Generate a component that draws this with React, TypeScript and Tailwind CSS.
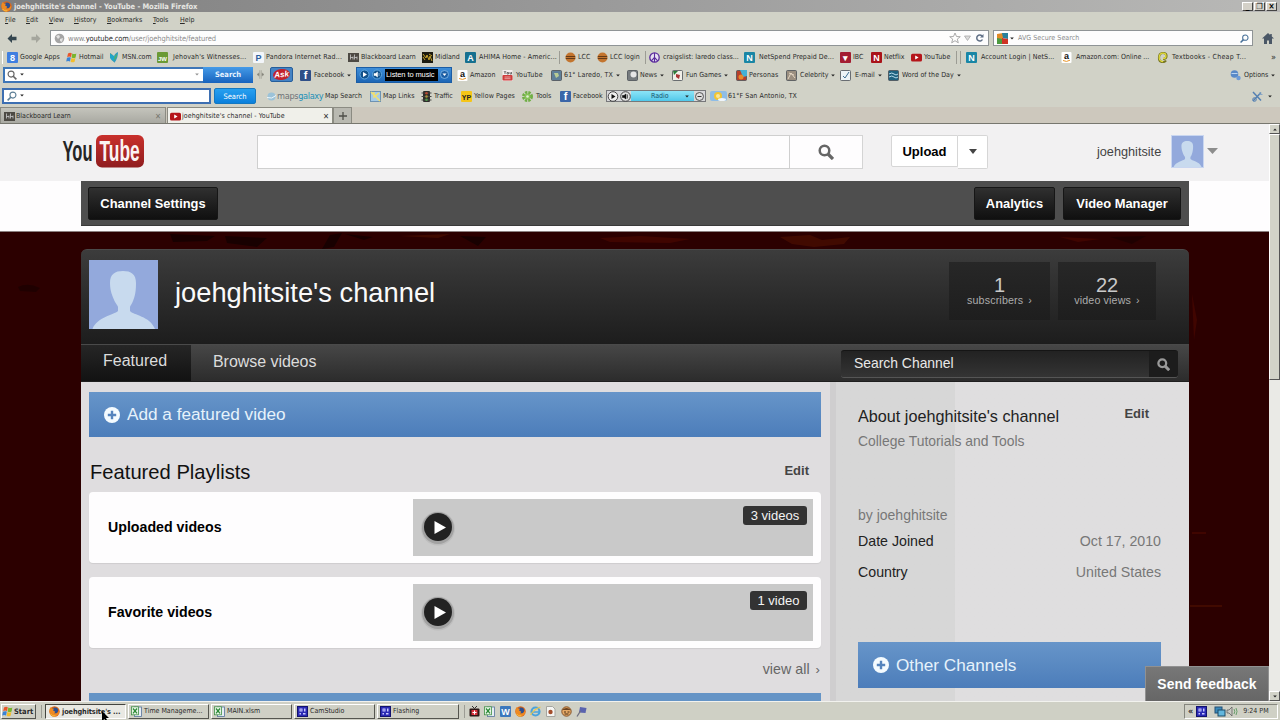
import type { ReactNode } from "react";

const UI = "font-['DejaVu_Sans_Condensed','DejaVu_Sans',sans-serif] text-[7px] leading-[9px]";

/* ---------- icons ---------- */

function Letter({ bg, fg = "#fff", ch, size = 9 }: { bg: string; fg?: string; ch: string; size?: number }) {
  return (
    <svg width="11" height="11" viewBox="0 0 11 11" className="shrink-0">
      <rect width="11" height="11" rx="1" fill={bg} />
      <text x="5.5" y="8.7" textAnchor="middle" fontSize={size} fontWeight="700" fontFamily="Liberation Sans" fill={fg}>
        {ch}
      </text>
    </svg>
  );
}

function Svg({ children, w = 11, h = 11 }: { children: ReactNode; w?: number; h?: number }) {
  return (
    <svg width={w} height={h} viewBox={`0 0 ${w} ${h}`} className="shrink-0">
      {children}
    </svg>
  );
}

const Firefox = () => (
  <Svg>
    <circle cx="5.5" cy="5.5" r="5.2" fill="#d9661a" />
    <circle cx="6" cy="4.6" r="3.1" fill="#2c4f8f" />
    <path d="M.6 3.2C1 1.8 2 1 2 1l.8 1.4 2.4.3-1.3 1.6 2.3 1.5-1 1.7 2.8-.3 2.3-2.6c.2 3-1.7 5.8-4.9 5.9C2 10.500.1 7.500.6 3.200z" fill="#ee8a22" />
    <path d="M1.500 8c1 1.500 3 2.200 4.800 1.800" stroke="#f8cf4a" strokeWidth=".8" fill="none" />
  </Svg>
);

const WinFlag = () => (
  <Svg>
    <path d="M2 1.500q2-1.300 3.800-.2L5 5Q3 4 1.200 5.200z" fill="#e8562a" />
    <path d="M6.300 1.600q2 1 4 0L9.600 5.400q-2 1-4 0z" fill="#79b52d" />
    <path d="M1 5.800q2-1.200 3.800-.2l-.8 3.800Q2 8.400.200 9.600z" fill="#3a83d6" />
    <path d="M5.400 6q2 1 4 0l-.8 3.800q-2 1-4 0z" fill="#f3bd2a" />
  </Svg>
);

const Msn = () => (
  <Svg>
    <path d="M1 1q4 1 4 9Q2 8 1 1z" fill="#e8842a" />
    <path d="M1 1l4 3v6Q2 8 1 6z" fill="#20a6c9" />
    <path d="M9 0Q5 2 5 5v6q4-4 4-11z" fill="#2f9cc0" />
    <path d="M8 2Q5 4 5 8q3-2 3-6z" fill="#4fb36a" />
  </Svg>
);

const Blackboard = () => (
  <Svg>
    <rect y="1" width="11" height="9" fill="#4d4a44" />
    <path d="M2.500 2.500v5M5 4.500v3M6.500 2.500v5M9 4.500v3M2.500 5.500H5M6.500 5.500H9" stroke="#ccc" strokeWidth=".8" />
  </Svg>
);

const Midland = () => (
  <Svg>
    <rect width="11" height="11" fill="#1b1a10" />
    <path d="M1 2l3 4 1-3 2 5 1-4 2 5M1 5l2 3M7 2l3 2" stroke="#c9a52c" strokeWidth="1" fill="none" />
  </Svg>
);

const Ball = () => (
  <Svg>
    <circle cx="5.500" cy="5.500" r="5" fill="#c3752f" />
    <path d="M.8 4.500h9.400M.8 6.500h9.400" stroke="#5a3415" strokeWidth=".9" />
  </Svg>
);

const Peace = () => (
  <Svg>
    <circle cx="5.500" cy="5.500" r="4.700" fill="#e6dff2" stroke="#5a2a9c" strokeWidth="1.300" />
    <path d="M5.500 1v9M5.500 5.500L2.300 8.800M5.500 5.500l3.200 3.300" stroke="#5a2a9c" strokeWidth="1.100" />
  </Svg>
);

const Tube = () => (
  <Svg>
    <rect y="1.800" width="11" height="7.600" rx="1.500" fill="#b5151a" />
    <path d="M4.200 3.600l3.400 2-3.400 2z" fill="#fff" />
  </Svg>
);

const OldTube = () => (
  <Svg>
    <rect x=".5" width="10" height="11" fill="#f4efef" />
    <path d="M2 1l1 1.500V4M4 1L3 2.500M5 2.500h1.500V4H5zM8 2v2h1.500V2" stroke="#444" strokeWidth=".7" fill="none" />
    <rect x=".5" y="5" width="10" height="5.500" rx="1" fill="#cf3b3b" />
    <path d="M2.500 7h6M2.500 8.700h6" stroke="#f3cccc" strokeWidth=".7" />
  </Svg>
);

const Amazon = () => (
  <Svg>
    <rect x=".5" width="10" height="11" rx="1" fill="#fff" />
    <text x="5.500" y="7" fontSize="9" textAnchor="middle" fontWeight="700" fontFamily="Liberation Sans" fill="#111">
      a
    </text>
    <path d="M2 8.500q3.500 2 7-.3" stroke="#e8962a" fill="none" />
  </Svg>
);

const Chegg = () => (
  <Svg>
    <path d="M2 6Q2 1 6 1q3.500 0 3.500 3Q9.500 7 6 7M2 6q0 4 4 4 2 0 3-1.500" stroke="#777521" strokeWidth="2.200" fill="none" />
    <path d="M2.200 6Q2 1.200 6 1.200q3 0 3 2.800Q9 6.600 6 6.600M2.200 6q.3 3.600 4 3.600" stroke="#e2dc3c" strokeWidth="1.200" fill="none" />
  </Svg>
);

// framed thumbnail used by the toolbar's widget buttons
function Tile({ bg, children }: { bg: string; children?: ReactNode }) {
  return (
    <Svg>
      <rect x=".5" y=".5" width="10" height="10" rx="1" fill={bg} stroke="#4a4f55" strokeWidth=".8" />
      {children}
    </Svg>
  );
}

const Excel = () => (
  <Svg>
    <rect x="3.500" y="1" width="7" height="9.500" fill="#e7eef5" stroke="#56739a" strokeWidth=".8" />
    <rect x=".5" y=".8" width="7" height="8" fill="#eaf5e8" stroke="#3f8f45" strokeWidth=".8" />
    <path d="M2 2.500l4 4.800M6 2.500L2 7.300" stroke="#2b8a36" strokeWidth="1.300" />
  </Svg>
);

const Cam = () => (
  <Svg>
    <rect x=".5" y=".5" width="10" height="10" fill="#2a2ab4" stroke="#12126e" />
    <path d="M2.500 2.500h3v3h-3zM7 2.500h1.500v3H7zM2.500 7h1.500v1.500H2.500zM6 7h2.500v1.500H6z" fill="#c8c8ff" />
    <rect x="3.500" y="3.500" width="1" height="1" fill="#2a2ab4" />
  </Svg>
);

function Magnifier({ size, color, width = 2.500 }: { size: number; color: string; width?: number }) {
  return (
    <svg width={size} height={size} viewBox="0 0 16 16" fill="none" stroke={color} strokeWidth={width} className="shrink-0">
      <circle cx="6.500" cy="6.500" r="4.800" />
      <path d="M10 10l5 5" strokeWidth={width + 0.8} />
    </svg>
  );
}

const FlippedMagnifier = ({ size, color }: { size: number; color: string }) => (
  <span className="-scale-x-100">
    <Magnifier size={size} color={color} width={1.8} />
  </span>
);

const Caret = ({ className = "" }: { className?: string }) => (
  <svg width="4" height="3" viewBox="0 0 4 3" className={`shrink-0 ${className}`}>
    <path d="M.2.5h3.600L2 2.500z" fill="#222" />
  </svg>
);

const PlusCircle = () => (
  <svg width="16" height="16" viewBox="0 0 16 16" className="shrink-0">
    <circle cx="8" cy="8" r="8" fill="#f4fbff" />
    <path d="M8 3.800v8.400M3.800 8h8.400" stroke="#5584bd" strokeWidth="2.400" />
  </svg>
);

function Avatar({ className }: { className: string }) {
  return (
    <svg viewBox="0 0 69 69" className={className}>
      <rect width="69" height="69" fill="#93a9dc" />
      <path
        d="M34 11c8 0 13 3 13 12 0 8-1 13-3 18-1 3-3 5-3 6v4c3 4 20 5 25 18H3.500C8 57 25 55 29 51v-4c0-1-2-3-3.500-6-2-5-4.500-10-4.500-18 0-9 5-12 13-12z"
        fill="#c8daee"
      />
    </svg>
  );
}

/* ---------- browser chrome ---------- */

interface BarItem {
  label: string;
  icon: ReactNode;
  w: string;
  iconW?: string;
  track?: string;
  caret?: boolean;
}

function BarLink({ label, icon, w, iconW = "w-[13px]", track = "", caret }: BarItem) {
  return (
    <div className={`flex h-[12px] shrink-0 items-center whitespace-nowrap ${w}`}>
      <span className={`flex shrink-0 ${iconW}`}>{icon}</span>
      <span className={track}>{label}</span>
      {caret && <Caret className="ml-[3px]" />}
    </div>
  );
}

const Divider = ({ className }: { className: string }) => (
  <span className={`h-[13px] shrink-0 border-l border-[#9c9c94] ${className}`} />
);

const BOOKMARKS_A: BarItem[] = [
  { label: "Google Apps", icon: <Letter bg="#3f7fe0" ch="8" />, w: "w-[59px]" },
  { label: "Hotmail", icon: <WinFlag />, w: "w-[43px]" },
  { label: "MSN.com", icon: <Msn />, w: "w-[48px]" },
  {
    label: "Jehovah's Witnesses...",
    icon: <Letter bg="#6b9a35" ch="JW" size={6} />,
    w: "w-[96px]",
    iconW: "w-[16px]",
    track: "tracking-[0.15px]",
  },
  {
    label: "Pandora Internet Rad...",
    icon: <Letter bg="#f3f6fa" fg="#2d5f9e" ch="P" />,
    w: "w-[95px]",
    track: "tracking-[0.15px]",
  },
  { label: "Blackboard Learn", icon: <Blackboard />, w: "w-[74px]" },
  { label: "Midland", icon: <Midland />, w: "w-[43px]" },
  {
    label: "AHIMA Home - Americ...",
    icon: <Letter bg="#16708f" ch="A" />,
    w: "w-[94px]",
    iconW: "w-[14px]",
    track: "tracking-[0.1px]",
  },
];

const BOOKMARKS_B: BarItem[] = [
  { label: "LCC", icon: <Ball />, w: "w-[32px]" },
  { label: "LCC login", icon: <Ball />, w: "w-[48px]" },
];

const BOOKMARKS_C: BarItem[] = [
  { label: "craigslist: laredo class...", icon: <Peace />, w: "w-[95px]", iconW: "w-[14px]" },
  {
    label: "NetSpend Prepaid De...",
    icon: <Letter bg="#1a86a5" ch="N" />,
    w: "w-[96px]",
    iconW: "w-[15px]",
    track: "tracking-[0.08px]",
  },
  { label: "IBC", icon: <Letter bg="#a31d31" ch="▾" />, w: "w-[31px]" },
  { label: "Netflix", icon: <Letter bg="#a91319" ch="N" />, w: "w-[40px]" },
  { label: "YouTube", icon: <Tube />, w: "w-[45px]", track: "tracking-[0.15px]" },
];

const BOOKMARKS_D: BarItem[] = [
  {
    label: "Account Login | NetS...",
    icon: <Letter bg="#1a86a5" ch="N" />,
    w: "w-[95px]",
    iconW: "w-[15px]",
    track: "tracking-[0.08px]",
  },
  { label: "Amazon.com: Online ...", icon: <Amazon />, w: "w-[96px]", iconW: "w-[15px]" },
  {
    label: "Textbooks - Cheap T...",
    icon: <Chegg />,
    w: "w-[114px]",
    iconW: "w-[15px]",
    track: "tracking-[0.25px]",
  },
];

const WIDGETS: BarItem[] = [
  { label: "Amazon", icon: <Amazon />, w: "w-[45px]", iconW: "w-[13px]" },
  { label: "YouTube", icon: <OldTube />, w: "w-[49px]", iconW: "w-[14px]", track: "tracking-[0.2px]" },
  {
    label: "61° Laredo, TX",
    icon: (
      <Tile bg="#5f7f98">
        <path d="M3 3h4l1 3-3 2z" fill="#b9cc94" />
      </Tile>
    ),
    w: "w-[76px]",
    track: "tracking-[0.15px]",
    caret: true,
  },
  {
    label: "News",
    icon: (
      <Tile bg="#767b7e">
        <circle cx="6.500" cy="4.500" r="3" fill="#e6e6e6" />
      </Tile>
    ),
    w: "w-[45px]",
    caret: true,
  },
  {
    label: "Fun Games",
    icon: (
      <Tile bg="#f0efe8">
        <path d="M1 1h5L2 5z" fill="#2b7b38" />
        <path d="M4 4l4 1-1 4-3-2z" fill="#a33" />
      </Tile>
    ),
    w: "w-[64px]",
    iconW: "w-[14px]",
    caret: true,
  },
  {
    label: "Personas",
    icon: (
      <Tile bg="#b7402a">
        <path d="M4 0h7v6L7 7z" fill="#45b1d6" />
        <circle cx="5" cy="7" r="2.500" fill="#e88a2a" />
      </Tile>
    ),
    w: "w-[50px]",
    track: "tracking-[0.15px]",
  },
  {
    label: "Celebrity",
    icon: (
      <Tile bg="#9b8f80">
        <path d="M2 9l3-6 4 5M3 3l5 2" stroke="#e5d6c2" fill="none" />
      </Tile>
    ),
    w: "w-[54px]",
    iconW: "w-[14px]",
    caret: true,
  },
  {
    label: "E-mail",
    icon: (
      <Tile bg="#edf3f7">
        <path d="M3 6l2 2 4-6" stroke="#3e6e93" fill="none" />
      </Tile>
    ),
    w: "w-[48px]",
    iconW: "w-[15px]",
    caret: true,
  },
  {
    label: "Word of the Day",
    icon: (
      <Tile bg="#1d617f">
        <path d="M1 4q3-2 5 0t4 0M1 7q3-2 5 0t4 0" stroke="#b7dceb" fill="none" />
      </Tile>
    ),
    w: "w-[342px]",
    iconW: "w-[14px]",
    track: "tracking-[0.05px]",
    caret: true,
  },
];

const MAP_LINKS: BarItem[] = [
  {
    label: "Map Links",
    icon: (
      <Svg>
        <rect x=".5" y=".5" width="10" height="10" fill="#a6cbe8" stroke="#6e93b2" />
        <path d="M1 1l9 9M4 1v5l5-4" stroke="#f3e06c" strokeWidth="1.500" fill="none" />
      </Svg>
    ),
    w: "w-[51px]",
  },
  {
    label: "Traffic",
    icon: (
      <Svg>
        <rect x="2" width="7" height="11" rx="1" fill="#2e2e2b" />
        <path d="M.5 2h10M.5 5.500h10M.5 9h10" stroke="#444" />
        <circle cx="5.500" cy="2.200" r="1.300" fill="#b64a32" />
        <circle cx="5.500" cy="5.500" r="1.300" fill="#a7923a" />
        <circle cx="5.500" cy="8.800" r="1.300" fill="#4f9a4a" />
      </Svg>
    ),
    w: "w-[40px]",
  },
  {
    label: "Yellow Pages",
    icon: <Letter bg="#f5c518" fg="#222" ch="YP" size={7} />,
    w: "w-[61px]",
    track: "tracking-[0.1px]",
  },
  {
    label: "Tools",
    icon: (
      <Svg>
        <circle cx="5.500" cy="5.500" r="4" fill="none" stroke="#6fae45" strokeWidth="3" strokeDasharray="2.200 1" />
        <circle cx="5.500" cy="5.500" r="3" fill="#86c257" />
        <circle cx="5.500" cy="5.500" r="1.300" fill="#e3f0d6" />
      </Svg>
    ),
    w: "w-[38px]",
    iconW: "w-[14px]",
  },
  { label: "Facebook", icon: <Letter bg="#3b66a8" ch="f" size={11} />, w: "w-[46px]" },
];

function TitleBar() {
  const glyphs = ["_", "❐", "×"];
  return (
    <div className="flex h-[12px] items-center bg-linear-to-r from-[#7f7f7f] via-[#9c9c9c] to-[#b9b9b7] pl-[1px] pr-[2px]">
      <Firefox />
      <span className="ml-[2px] flex-1 whitespace-nowrap font-['DejaVu_Sans_Condensed'] text-[7.500px] leading-[9px] font-bold tracking-[-0.06px] text-[#e6e6e2]">
        joehghitsite's channel - YouTube - Mozilla Firefox
      </span>
      {glyphs.map((g) => (
        <span
          key={g}
          className="mr-[1px] flex h-[9px] w-[11px] items-center justify-center border border-t-white border-r-[#444] border-b-[#444] border-l-white bg-[#d4d1c8] text-[8px] leading-[7px] font-bold text-black"
        >
          {g}
        </span>
      ))}
    </div>
  );
}

function MenuBar() {
  const menus = [
    ["File", "w-[21px]"],
    ["Edit", "w-[23px]"],
    ["View", "w-[25px]"],
    ["History", "w-[33px]"],
    ["Bookmarks", "w-[46px]"],
    ["Tools", "w-[27px]"],
    ["Help", "w-[30px]"],
  ];
  return (
    <div className="flex h-[16px] items-center pl-[5px]">
      {menus.map(([name, w]) => (
        <span key={name} className={w}>
          <span className="underline decoration-[0.5px] underline-offset-1">{name[0]}</span>
          {name.slice(1)}
        </span>
      ))}
    </div>
  );
}

function AddressRow() {
  return (
    <div className="flex h-[20px] items-center">
      <div className="flex w-[50px] items-center gap-[14px] pl-[7px]">
        <svg width="10" height="9" viewBox="0 0 10 9">
          <path d="M5 0L.5 4.500 5 9V6.200h4.500V2.800H5z" fill="#34464f" />
        </svg>
        <svg width="10" height="9" viewBox="0 0 10 9">
          <path d="M5 0l4.500 4.500L5 9V6.200H.5V2.800H5z" fill="#a5a69d" />
        </svg>
      </div>
      <div className="flex h-[16px] w-[939px] items-center border border-[#8f9496] bg-[#fdfdfd] pl-[3px] pr-[3px]">
        <svg width="11" height="11" viewBox="0 0 11 11">
          <circle cx="5.500" cy="5.500" r="4.800" fill="#a5a5a5" />
          <path d="M2 3l3-1 1 2-2 2zM6 6l3-1-1 4-2-1z" fill="#e2e2e2" />
        </svg>
        <span className="ml-[3px] flex-1 text-[7.500px] tracking-[-0.1px] text-[#8d8d8d]">
          www.<span className="text-[#2c2c2c]">youtube.com</span>/user/joehghitsite/featured
        </span>
        <svg width="36" height="12" viewBox="0 0 36 12" fill="none">
          <path d="M6 1l1.500 3.500 3.800.2-3 2.400 1 3.700L6 8.700l-3.300 2.100 1-3.700-3-2.400 3.800-.2z" stroke="#a2a2a2" strokeWidth=".9" />
          <path d="M15.500 4h6l-3 4.500z" fill="#dcdcdc" stroke="#a8a8a8" strokeWidth=".8" />
          <path d="M33 4a3 3 0 1 0 .4 3.500" stroke="#5f6f85" strokeWidth="1.500" />
          <path d="M31 5.500h3.500V2z" fill="#5f6f85" />
        </svg>
      </div>
      <div className="ml-[4px] flex h-[16px] w-[260px] items-center border border-[#8f9496] bg-[#fdfdfd] px-[3px]">
        <Svg>
          <path d="M0 1l6-1v6H0z" fill="#e08a26" />
          <path d="M5 0h6v6L6 5z" fill="#287f9b" />
          <path d="M0 5l6 1-1 5H0z" fill="#4d9a40" />
          <path d="M5 5l6 1v5H5z" fill="#cf3324" />
        </Svg>
        <Caret className="ml-[2px]" />
        <span className="ml-[4px] flex-1 tracking-[0.06px] text-[#8b8b8b]">AVG Secure Search</span>
        <FlippedMagnifier size={9} color="#456f98" />
      </div>
      <svg width="12" height="11" viewBox="0 0 12 11" className="ml-[9px]">
        <path d="M6 0L0 5.500h2V11h3V7.500h2V11h3V5.500h2L9.800 3.400V1H8.200v1z" fill="#4a5766" />
      </svg>
    </div>
  );
}

function BookmarksRow() {
  return (
    <div className="flex h-[18px] items-center">
      <Divider className="mr-[4px] ml-[2px] border-white" />
      {BOOKMARKS_A.map((b) => (
        <BarLink key={b.label} {...b} />
      ))}
      <Divider className="w-[6px]" />
      {BOOKMARKS_B.map((b) => (
        <BarLink key={b.label} {...b} />
      ))}
      <Divider className="w-[4px]" />
      {BOOKMARKS_C.map((b) => (
        <BarLink key={b.label} {...b} />
      ))}
      <Divider className="w-[4px]" />
      <Divider className="w-[6px]" />
      {BOOKMARKS_D.map((b) => (
        <BarLink key={b.label} {...b} />
      ))}
      <span className="text-[9px]">»</span>
    </div>
  );
}

function MusicWidget() {
  return (
    <div className="mr-[5px] flex h-[16px] w-[96px] shrink-0 items-center gap-[2px] border border-[#1b5da5] bg-linear-to-b from-[#3e8ed9] to-[#1c66b6] px-[2px]">
      <svg width="24" height="11" viewBox="0 0 24 11">
        <circle cx="5.500" cy="5.500" r="4.500" fill="#11528c" stroke="#5fa8e0" />
        <path d="M4 3l4 2.500L4 8z" fill="#fff" />
        <circle cx="18" cy="5.500" r="4.500" fill="#11528c" stroke="#5fa8e0" />
        <path d="M15 4.500h1.500L18.500 3v5l-2-1.500H15zM20 4v3" fill="#fff" stroke="#fff" strokeWidth=".5" />
      </svg>
      <span className="flex h-[12px] w-[53px] items-center bg-black pl-[1px] font-['Liberation_Sans',sans-serif] text-[7.500px] tracking-[-0.1px] whitespace-nowrap text-white">
        Listen to music
      </span>
      <svg width="9" height="9" viewBox="0 0 9 9">
        <circle cx="4.500" cy="4.500" r="4" fill="#1c5fa5" stroke="#86bdea" strokeWidth=".8" />
        <path d="M2.500 3.500h4l-2 2.500z" fill="#fff" />
      </svg>
    </div>
  );
}

function SearchRow() {
  return (
    <div className="flex h-[17px] items-center pl-[3px]">
      <div className="flex h-[16px] w-[200px] shrink-0 items-center border-2 border-r-0 border-[#3e76b7] bg-white pr-[4px] pl-[2px]">
        <Magnifier size={10} color="#666" width={1.8} />
        <Caret className="ml-[3px]" />
        <span className="flex-1" />
        <Caret className="opacity-50" />
      </div>
      <div className="flex h-[16px] w-[50px] shrink-0 items-center justify-center bg-linear-to-b from-[#459be8] to-[#1763bd] text-[7.500px] font-bold text-[#e6f3ff]">
        Search
      </div>
      <svg width="7" height="11" viewBox="0 0 9 11" className="mr-[6px] ml-[4px] shrink-0">
        <path d="M3.500 0v11M5.500 0v11M0 5.500l2.500-2v4zM9 5.500l-2.500-2v4z" stroke="#98988e" strokeWidth=".8" fill="#77776f" />
      </svg>
      <div className="mr-[7px] flex h-[15px] w-[23px] shrink-0 items-center justify-center rounded-[2px] border border-[#255e9c] bg-[#4583c4]">
        <span className="flex h-[11px] w-[17px] -rotate-6 items-center justify-center rounded-[50%] bg-[#c3212b] font-['Liberation_Sans'] text-[8px] font-bold text-white italic">
          Ask
        </span>
      </div>
      <div className="flex h-full items-center pt-[1px]">
        <BarLink
          label="Facebook"
          icon={<Letter bg="#2f4f88" ch="f" size={11} />}
          w="w-[56px]"
          iconW="w-[14px]"
          track="tracking-[0.1px]"
          caret
        />
      </div>
      <MusicWidget />
      <div className="flex h-full items-center pt-[1px]">
        {WIDGETS.map((b) => (
          <BarLink key={b.label} {...b} />
        ))}
        <BarLink
          label="Options"
          icon={
            <Svg>
              <circle cx="4.500" cy="4" r="3.800" fill="#5a8ac8" />
              <path d="M1.500 3.500h6" stroke="#bcd4f0" />
              <circle cx="8.500" cy="8" r="2.200" fill="#6d9bd8" />
            </Svg>
          }
          w="w-[50px]"
          iconW="w-[14px]"
          caret
        />
      </div>
    </div>
  );
}

function RadioWidget() {
  return (
    <div className="mr-[4px] flex h-[12px] w-[100px] shrink-0 items-center border border-[#77787a] bg-[#d7d8da]">
      <svg width="24" height="11" viewBox="0 0 24 11" className="shrink-0">
        <circle cx="6" cy="5.500" r="4.800" fill="#efefef" stroke="#444" />
        <path d="M4.500 3L8.500 5.500l-4 2.500z" fill="#111" />
        <circle cx="18.500" cy="5.500" r="4.800" fill="#e3e3e3" stroke="#444" />
        <path d="M15.500 4.500H17L19 3v5l-2-1.500h-1.500zM20.500 3.500v4" fill="#111" stroke="#111" strokeWidth=".6" />
      </svg>
      <span className="flex h-[10px] flex-1 items-center bg-linear-to-b from-[#8be4f7] to-[#4fc8ea] pl-[20px] text-[#16546e]">
        <span className="flex-1">Radio</span>
        <Caret className="mr-[5px]" />
      </span>
      <svg width="11" height="11" viewBox="0 0 11 11" className="shrink-0">
        <circle cx="5.500" cy="5.500" r="4" fill="#ddd" stroke="#555" />
        <path d="M3.500 5.500h4" stroke="#333" />
      </svg>
    </div>
  );
}

function MapsRow() {
  return (
    <div className="flex h-[24px] items-center pt-[2px] pl-[2px]">
      <div className="mb-[1px] flex h-[16px] w-[209px] shrink-0 items-center border-2 border-[#3d6fb2] bg-white pl-[3px]">
        <FlippedMagnifier size={10} color="#5d7f96" />
        <Caret className="ml-[3px]" />
      </div>
      <div className="mr-[11px] ml-[3px] flex h-[16px] w-[42px] shrink-0 items-center justify-center rounded-[2px] border border-[#1478c0] bg-linear-to-b from-[#27a0f0] to-[#0a80dc] text-[7.500px] text-white">
        Search
      </div>
      <Svg w={9}>
        <circle cx="4.500" cy="5.500" r="4" fill="#9cc3d9" />
        <path d="M0 6.500q5 2 9-2" stroke="#eef6fa" fill="none" />
      </Svg>
      <span className="ml-[1px] flex w-[48px] shrink-0 font-['DejaVu_Sans'] text-[8.200px] tracking-[-0.300px] text-[#6f7377]">
        maps<span className="tracking-[-0.350px] text-[#1c8fb8]">galaxy</span>
      </span>
      <span className="w-[45px] shrink-0 whitespace-nowrap">Map Search</span>
      {MAP_LINKS.map((b) => (
        <BarLink key={b.label} {...b} />
      ))}
      <RadioWidget />
      <BarLink
        label="61°F San Antonio, TX"
        icon={
          <Svg w={17} h={12}>
            <rect y="1" width="17" height="10" rx="2" fill="#8fbde6" />
            <circle cx="8" cy="6" r="4" fill="#f2c534" />
            <circle cx="8" cy="6" r="2" fill="#f9e79a" />
            <ellipse cx="12" cy="9.500" rx="4" ry="1.500" fill="#eff5fa" />
          </Svg>
        }
        w="w-[542px]"
        iconW="w-[18px]"
        track="tracking-[0.1px]"
      />
      <svg width="11" height="11" viewBox="0 0 11 11" className="shrink-0">
        <path d="M1 1l8 8.500M1 10l8-8.500" stroke="#5580b2" strokeWidth="1.500" />
        <circle cx="2.500" cy="8.500" r="1.800" fill="none" stroke="#5580b2" />
        <path d="M8 1v2.500h2.500" fill="none" stroke="#87a6c6" />
      </svg>
      <Caret className="ml-[5px]" />
    </div>
  );
}

function TabStrip() {
  return (
    <div className="flex h-[17px] border-b border-[#77776f] bg-[#cdc8bd]">
      <div className="flex w-[166px] items-center border border-b-0 border-[#8b8b82] bg-linear-to-b from-[#c4c4bc] to-[#a9a9a2] pt-[1px] pr-[4px] pl-[3px]">
        <Blackboard />
        <span className="ml-[1px] flex-1">Blackboard Learn</span>
        <span className="text-[8px] text-[#77776f]">✕</span>
      </div>
      <div className="ml-[1px] flex w-[166px] items-center border border-b-0 border-[#8b8b82] bg-[#f0f0ea] pt-[1px] pr-[3px] pl-[2px]">
        <Tube />
        <span className="ml-[1px] flex-1 tracking-[0.06px] whitespace-nowrap">joehghitsite's channel - YouTube</span>
        <span className="text-[8px] text-[#333]">✕</span>
      </div>
      <div className="flex w-[19px] items-center justify-center border border-b-0 border-[#8b8b82] bg-[#b9b9b1]">
        <svg width="8" height="8" viewBox="0 0 8 8">
          <path d="M4 0v8M0 4h8" stroke="#4e4e49" strokeWidth="1.300" />
        </svg>
      </div>
    </div>
  );
}

/* ---------- page ---------- */

function Logo() {
  return (
    <svg width="84" height="34" viewBox="0 0 84 34" fontFamily="Liberation Sans" fontWeight="700" fontSize="29">
      <defs>
        <linearGradient id="logoRed" x1="0" y1="0" x2="0" y2="1">
          <stop offset="0" stopColor="#c9302c" />
          <stop offset="1" stopColor="#8f1d1f" />
        </linearGradient>
      </defs>
      <rect x="34" y="0" width="48" height="32.500" rx="6" fill="url(#logoRed)" />
      <text transform="translate(0.500 26) scale(0.570 1)" fill="#252525">
        You
      </text>
      <text transform="translate(37.500 26) scale(0.600 1)" fill="#fbf3f3">
        Tube
      </text>
    </svg>
  );
}

function Masthead() {
  return (
    <header className="flex h-[57px] shrink-0 items-start bg-[#f2f1f2] pt-[11px] pl-[62px]">
      <div className="w-[195px]">
        <Logo />
      </div>
      <div className="h-[34px] w-[533px] border border-[#cfcfcf] bg-[#fefdfe]" />
      <div className="flex h-[34px] w-[73px] items-center justify-center border border-l-0 border-[#d4d4d4] bg-[#fefdfe]">
        <Magnifier size={16} color="#666" />
      </div>
      <div className="ml-[28px] flex h-[32px] w-[67px] items-center justify-center rounded-l-[2px] border border-[#d6d6d6] bg-white text-[13px] font-bold text-black">
        Upload
      </div>
      <div className="flex h-[34px] w-[30px] items-center justify-center rounded-r-[2px] border border-l-0 border-[#d6d6d6] bg-white pb-[2px]">
        <svg width="8" height="5" viewBox="0 0 8 5">
          <path d="M0 0h8L4 5z" fill="#444" />
        </svg>
      </div>
      <span className="mt-[8px] ml-[109px] w-[74px] text-[12.700px] leading-[19px] text-[#444]">joehghitsite</span>
      <Avatar className="h-[33px] w-[33px] border border-[#c9d6f0]" />
      <svg width="11" height="6" viewBox="0 0 11 6" className="mt-[13px] ml-[3px]">
        <path d="M0 0h11L5.500 6z" fill="#8d8d8d" />
      </svg>
    </header>
  );
}

function AdminButton({ children, className }: { children: ReactNode; className: string }) {
  return (
    <button
      type="button"
      className={`flex h-[33px] items-center justify-center rounded-[2px] border border-[#161616] bg-linear-to-b from-[#303030] to-[#101010] text-[12.900px] font-bold whitespace-nowrap text-white ${className}`}
    >
      {children}
    </button>
  );
}

function AdminBar() {
  return (
    <div className="h-[51px] shrink-0 border-b border-[#8c8080] bg-[#fefdfe] pl-[81px]">
      <div className="flex h-[45px] w-[1108px] border-b border-[#3a3a3a] bg-[#4e4e4e] pt-[6px] pr-[8px] pl-[7px]">
        <AdminButton className="w-[130px]">Channel Settings</AdminButton>
        <span className="flex-1" />
        <AdminButton className="mr-[8px] w-[81px]">Analytics</AdminButton>
        <AdminButton className="w-[118px]">Video Manager</AdminButton>
      </div>
    </div>
  );
}

function Stat({ value, label, className }: { value: string; label: string; className: string }) {
  return (
    <div className={`mt-[12px] flex h-[58px] flex-col items-center bg-linear-to-b from-[#272727] to-[#1e1e1e] pt-[12px] ${className}`}>
      <span className="text-[20px] leading-[22px] text-[#c9c9c9]">{value}</span>
      <span className="text-[10.700px] leading-[9px] tracking-[0.150px] text-[#acacac]">
        {label}
        <span className="ml-[5px]">›</span>
      </span>
    </div>
  );
}

function ChannelHeader() {
  return (
    <div className="flex h-[95px] rounded-t-[6px] border-t border-[#4a4a4a] bg-linear-to-b from-[#3c3c3c] via-[#2c2c2c] to-[#1d1d1d] pl-[8px]">
      <Avatar className="mt-[10px] h-[69px] w-[69px]" />
      <h1 className="mt-[27px] ml-[17px] w-[774px] text-[27.300px] leading-[32px] text-[#fafafa]">joehghitsite's channel</h1>
      <Stat value="1" label="subscribers" className="w-[101px]" />
      <Stat value="22" label="video views" className="ml-[8px] w-[98px]" />
    </div>
  );
}

function ChannelNav() {
  return (
    <nav className="flex h-[38px] border-t border-b border-t-[#4a4a4a] border-b-[#1f1f1f] bg-linear-to-b from-[#474747] to-[#2c2c2c] text-[16px] text-[#dcdcdc]">
      <span className="w-[110px] bg-linear-to-b from-[#262626] to-[#121212] pl-[22px] leading-[31px]">Featured</span>
      <span className="flex-1 pl-[22px] leading-[33px] tracking-[-0.050px]">Browse videos</span>
      <div className="mt-[5px] mr-[11px] flex h-[28px] w-[337px] rounded-[3px] border-t border-b border-t-[#151515] border-b-[#555] bg-linear-to-b from-[#222] to-[#343434]">
        <span className="flex-1 pl-[13px] text-[13.900px] leading-[24px] text-[#e8e8e8]">Search Channel</span>
        <span className="flex w-[29px] items-center justify-center rounded-r-[3px] bg-[#1c1c1c]">
          <Magnifier size={13} color="#999" width={2.800} />
        </span>
      </div>
    </nav>
  );
}

function BlueBar({ label, className }: { label: string; className: string }) {
  return (
    <div
      className={`flex items-center gap-[7px] bg-linear-to-b from-[#6795c9] to-[#4c7dba] pl-[15px] text-[17.200px] text-[#e6f2fb] ${className}`}
    >
      <PlusCircle />
      {label}
    </div>
  );
}

function PlaylistCard({ title, count, badgeW }: { title: string; count: string; badgeW: string }) {
  return (
    <div className="flex h-[71px] items-start rounded-[4px] bg-[#fefdfe] pt-[7px] pr-[8px] pl-[19px] shadow-[0_1px_1px_#cfcdcf]">
      <h3 className="flex-1 pt-[19px] text-[14.200px] leading-[18px] font-bold text-black">{title}</h3>
      <div className="flex h-[57px] w-[400px] items-start justify-between bg-[#c9c9c9] pr-[6px] pl-[7px]">
        <svg width="36" height="36" viewBox="0 0 36 36" className="mt-[11px]">
          <circle cx="18" cy="18.500" r="17" fill="#bdbdbd" />
          <circle cx="18" cy="18" r="16" fill="#a2a2a2" />
          <circle cx="18" cy="17" r="14" fill="#222" />
          <path d="M14.500 11l11.500 6.500L14.500 24z" fill="#fff" />
        </svg>
        <span
          className={`mt-[7px] flex h-[19px] items-center justify-center rounded-[3px] bg-[#333] text-[13px] text-[#f4f4f4] ${badgeW}`}
        >
          {count}
        </span>
      </div>
    </div>
  );
}

function MainColumn() {
  return (
    <div className="flex h-full w-[749px] shrink-0 flex-col pt-[10px] pr-[9px] pl-[8px]">
      <BlueBar label="Add a featured video" className="h-[45px] shrink-0" />
      <div className="flex h-[55px] shrink-0 items-center justify-between pt-[15px] pr-[12px] pl-[1px]">
        <h2 className="text-[20.200px] text-[#111]">Featured Playlists</h2>
        <span className="mb-[3px] text-[13px] font-bold text-[#444]">Edit</span>
      </div>
      <div className="flex flex-col gap-[14px]">
        <PlaylistCard title="Uploaded videos" count="3 videos" badgeW="w-[64px]" />
        <PlaylistCard title="Favorite videos" count="1 video" badgeW="w-[57px]" />
      </div>
      <div className="flex h-[45px] shrink-0 items-center justify-end gap-[6px] pr-[1px] pb-[3px] text-[14.200px] tracking-[0.050px] text-[#666]">
        view all <span className="text-[13px]">›</span>
      </div>
      <div className="flex-1 bg-[#6594c6]" />
    </div>
  );
}

function Sidebar() {
  const facts = [
    ["Date Joined", "Oct 17, 2010"],
    ["Country", "United States"],
  ];
  return (
    <aside className="h-full flex-1 border-l-[6px] border-[#cfcecf] bg-linear-to-r from-[#d7d7d7] from-[119px] to-[#dfdedf] to-[119px] pt-[23px] pr-[28px] pl-[22px]">
      <div className="flex justify-between pr-[12px] leading-[22px]">
        <h2 className="text-[16.200px] text-[#222]">About joehghitsite's channel</h2>
        <span className="-mt-[2px] text-[13px] font-bold text-[#444]">Edit</span>
      </div>
      <p className="mt-[4px] text-[13.900px] leading-[20px] text-[#777]">College Tutorials and Tools</p>
      <p className="mt-[54px] text-[14px] leading-[20px] text-[#777]">by joehghitsite</p>
      <dl className="mt-[2px] text-[14.200px]">
        {facts.map(([term, value]) => (
          <div key={term} className="flex h-[30.500px] justify-between leading-[29px]">
            <dt className="text-[#222]">{term}</dt>
            <dd className="text-[#777]">{value}</dd>
          </div>
        ))}
      </dl>
      <BlueBar label="Other Channels" className="mt-[54px] h-[46px]" />
    </aside>
  );
}

// faint stains on the channel's dark red background
function Backdrop() {
  return (
    <svg className="absolute inset-0" width="1269" height="470" viewBox="0 0 1269 470">
      <g fill="#180000">
        <path d="M170 2l45 2-8 5-34 1zM225 4l42 2-10 9-30-4zM330 3l12-2-8 14-12 2zM345 2l28 3-9 3zM460 4l26 1-8 9z" />
        <path d="M18 55q10-5 22 1l-4 4-16-1zM1110 5l36-1-14 8z" opacity=".6" />
      </g>
      <g fill="#501000" opacity=".6">
        <path d="M780 5l30-2 12 5 28-3-6 7-30 3-22-3zM1190 373h32v2h-32zM400 4l50-2-12 4z" />
      </g>
      <g fill="#400500">
        <path d="M600 6l40-2 50 3-20 4-60-1zM1060 5l40 2-22 3zM1192 62l5 26-3 20zM1192 300h14v2h-14z" />
      </g>
    </svg>
  );
}

function ScrollBar() {
  const btn =
    "flex h-[10px] shrink-0 items-center justify-center border border-t-white border-r-[#555] border-b-[#555] border-l-white bg-[#d2d3c8]";
  return (
    <div className="flex w-[11px] shrink-0 flex-col bg-[#eaeae6]">
      <div className={btn}>
        <span className="-scale-y-100">
          <Caret />
        </span>
      </div>
      <div className="h-[246px] border border-t-white border-r-[#555] border-b-[#555] border-l-white bg-[#d2d3c8]" />
      <div className="flex-1" />
      <div className={btn}>
        <Caret />
      </div>
    </div>
  );
}

function Page() {
  return (
    <div className="flex h-[577px] font-['Liberation_Sans',Arial,sans-serif]">
      <main className="relative flex w-[1269px] flex-col overflow-hidden">
        <Masthead />
        <AdminBar />
        <div className="relative flex-1 bg-[#2c0000] pt-[17px] pl-[81px]">
          <Backdrop />
          <div className="relative flex h-full w-[1108px] flex-col">
            <ChannelHeader />
            <ChannelNav />
            <div className="flex h-[320px] bg-[#dfdddf]">
              <MainColumn />
              <Sidebar />
            </div>
          </div>
        </div>
        <div className="absolute right-0 bottom-0 flex h-[35px] w-[124px] items-center justify-center border border-b-0 border-[#919191] bg-linear-to-b from-[#777] to-[#666] text-[13.900px] font-bold tracking-[0.100px] whitespace-nowrap text-white">
          Send feedback
        </div>
      </main>
      <ScrollBar />
    </div>
  );
}

/* ---------- taskbar ---------- */

const TASKS = [
  { label: "Time Manageme...", icon: <Excel />, w: "w-[81px]" },
  { label: "MAIN.xlsm", icon: <Excel />, w: "w-[81px]" },
  { label: "CamStudio", icon: <Cam />, w: "w-[81px]" },
  { label: "Flashing", icon: <Cam />, w: "w-[82px]" },
];

function QuickLaunch() {
  return (
    <div className="flex items-center gap-[4.300px]">
      <Svg>
        <path d="M3 0l2.500 2.500L8 0" stroke="#333" fill="none" />
        <rect x=".5" y="2.500" width="10" height="8" rx="1" fill="#2b1715" />
        <rect x="2.500" y="4" width="6" height="5" fill="#d8313b" />
        <path d="M5.500 4.500v4M3.500 6.500h4" stroke="#fff" />
      </Svg>
      <Excel />
      <Letter bg="#3c78bd" ch="W" />
      <Firefox />
      <Svg>
        <circle cx="5.500" cy="5.500" r="4" fill="none" stroke="#4aa3dc" strokeWidth="2.200" />
        <path d="M2 6h7" stroke="#4aa3dc" strokeWidth="1.500" />
        <path d="M.5 9Q4 3 10.500 1" stroke="#ecc64a" strokeWidth="1.200" fill="none" />
      </Svg>
      <Svg>
        <path d="M1.500.5h6l2.500 2.500v7.500H1.500z" fill="#f5f5f2" stroke="#a5a5a0" />
        <circle cx="5.500" cy="6" r="2.200" fill="#a34e2b" />
      </Svg>
      <Svg>
        <circle cx="5.500" cy="5.500" r="4.700" fill="#e5a966" stroke="#845328" />
        <path d="M1 4q4.500-4 9 0" fill="#6b4321" />
        <path d="M3 6h2M6.500 6h2M3.500 8h4" stroke="#4b2e16" />
      </Svg>
      <Svg>
        <path d="M4 1l6.500 1-1 5-6.500-.5z" fill="#5a63ae" />
        <path d="M4.500 5L1 10.500" stroke="#6f6f80" strokeWidth="1.300" />
      </Svg>
    </div>
  );
}

function Taskbar() {
  const raised = "border border-t-white border-r-[#55564f] border-b-[#55564f] border-l-white";
  return (
    <footer className="relative flex h-[19px] items-center border-t border-[#f2f2ee] bg-[#cfd0c5] pt-[2px] pb-[1px] pl-[1px]">
      <button type="button" className={`flex h-[15px] w-[35px] items-center gap-[1px] text-[7.500px] font-bold ${raised}`}>
        <WinFlag />
        Start
      </button>
      <Divider className="ml-[5px] w-[4px]" />
      <div className="flex h-[15px] w-[81px] items-center gap-[2px] border border-t-[#44453f] border-r-white border-b-white border-l-[#44453f] bg-[#e9e9e3] pl-[3px] text-[7.300px] font-bold tracking-[-0.1px] whitespace-nowrap">
        <Firefox />
        joehghitsite's ...
      </div>
      <div className="ml-[2px] flex gap-[2px]">
        {TASKS.map((t) => (
          <div key={t.label} className={`flex h-[15px] items-center gap-[2px] pl-[2px] whitespace-nowrap ${raised} ${t.w}`}>
            {t.icon}
            {t.label}
          </div>
        ))}
      </div>
      <Divider className="ml-[5px] w-[5px]" />
      <QuickLaunch />
      <div className="mr-[2px] ml-auto flex h-[15px] w-[94px] items-center border border-t-[#85867e] border-r-white border-b-white border-l-[#85867e] pl-[3px]">
        <span className="mr-[3px] text-[9px] font-bold">«</span>
        <Cam />
        <svg width="24" height="11" viewBox="0 0 24 11" className="ml-[7px]">
          <rect x="1" y="1" width="7" height="6" fill="#3a8abb" stroke="#234f75" />
          <rect x="4" y="4" width="7" height="6" fill="#62b7dd" stroke="#1c4b66" />
          <path d="M13 4h2l3-3v9l-3-3h-2z" fill="#c9cac4" stroke="#555" strokeWidth=".7" />
          <path d="M20 3q1.500 2.500 0 5M22 2q2 3.500 0 7" stroke="#4c9153" fill="none" strokeWidth=".8" />
        </svg>
        <span className="ml-[5px] whitespace-nowrap">9:24 PM</span>
      </div>
      <svg width="9" height="13" viewBox="0 0 9 13" className="absolute top-[9px] left-[101px]">
        <path d="M1 0l7 7H5l2 4-1.500 1-2-4L1 10z" fill="#000" />
      </svg>
    </footer>
  );
}

export default function App() {
  return (
    <div className={`h-[720px] w-[1280px] overflow-hidden bg-[#d1d2c7] text-[#2a2a2a] ${UI}`}>
      <TitleBar />
      <MenuBar />
      <AddressRow />
      <BookmarksRow />
      <SearchRow />
      <MapsRow />
      <TabStrip />
      <Page />
      <Taskbar />
    </div>
  );
}
